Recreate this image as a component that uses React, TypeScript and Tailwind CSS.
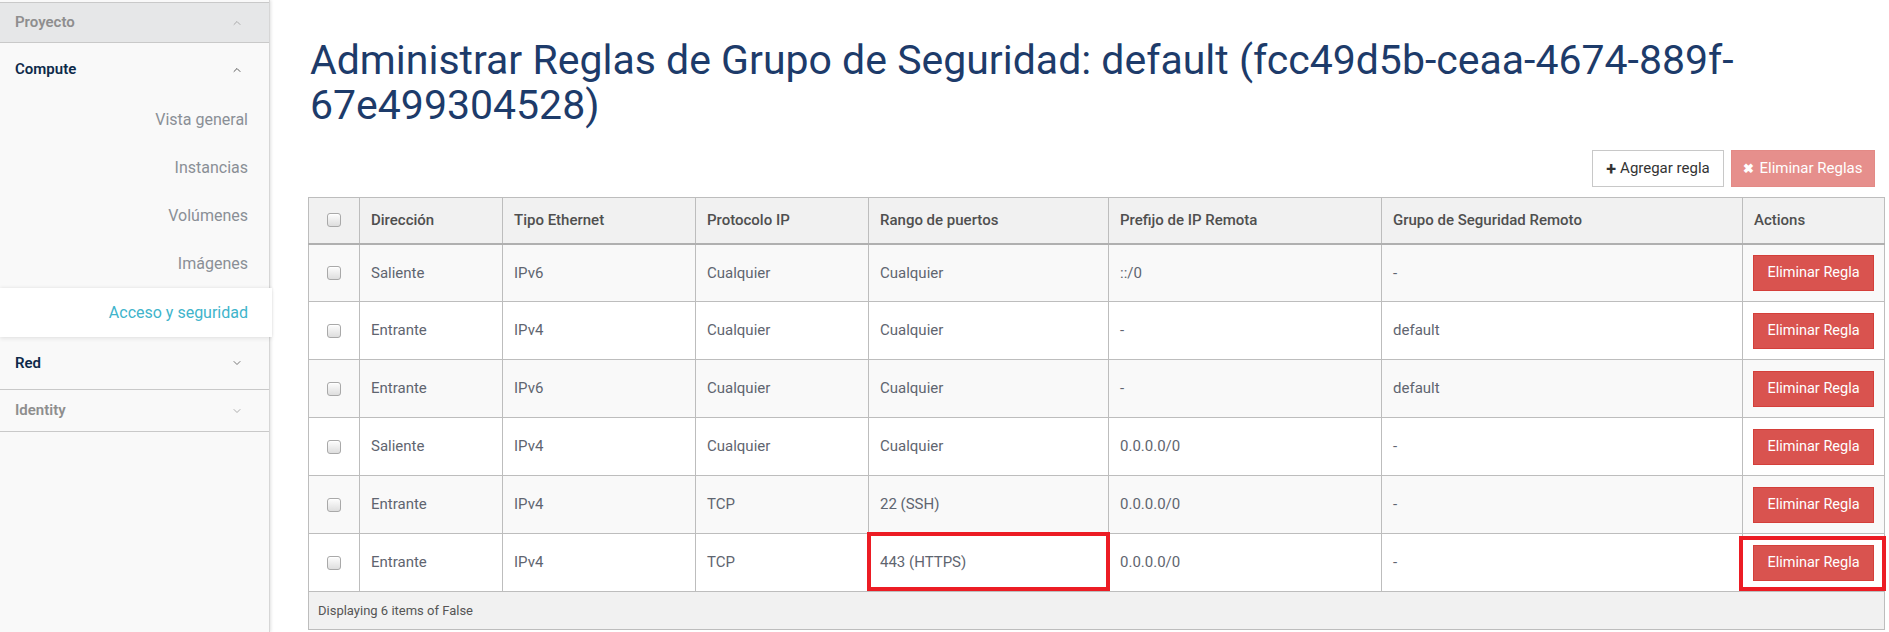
import { ChevronDown, ChevronUp } from "lucide-react";

const rows = [
  { dir: "Saliente", eth: "IPv6", proto: "Cualquier", range: "Cualquier", prefix: "::/0", group: "-" },
  { dir: "Entrante", eth: "IPv4", proto: "Cualquier", range: "Cualquier", prefix: "-", group: "default" },
  { dir: "Entrante", eth: "IPv6", proto: "Cualquier", range: "Cualquier", prefix: "-", group: "default" },
  { dir: "Saliente", eth: "IPv4", proto: "Cualquier", range: "Cualquier", prefix: "0.0.0.0/0", group: "-" },
  { dir: "Entrante", eth: "IPv4", proto: "TCP", range: "22 (SSH)", prefix: "0.0.0.0/0", group: "-" },
  { dir: "Entrante", eth: "IPv4", proto: "TCP", range: "443 (HTTPS)", prefix: "0.0.0.0/0", group: "-" },
];

function Check() {
  return (
    <span className="mx-auto block h-[14px] w-[14px] rounded-[3px] border border-[#a9a9a9] bg-gradient-to-b from-[#fdfdfd] to-[#dedede] shadow-[inset_0_1px_0_#fff]" />
  );
}

function Sidebar() {
  return (
    <aside className="flex min-h-[632px] w-[270px] shrink-0 flex-col border-r border-[#d6d6d6] bg-[#f9f9f9] pt-[2px] shadow-[1px_0_3px_rgba(0,0,0,0.12)]">
      <div className="flex h-[41px] items-center justify-between border-y border-[#c9c9c9] bg-[#e6e7e8] pl-[15px] pr-[26px]">
        <span className="text-[15px] font-semibold text-[#8e8e8e]">Proyecto</span>
        <ChevronUp size={12} strokeWidth={1.6} className="text-[#9a9a9a]" />
      </div>
      <div className="flex h-[53px] items-center justify-between pl-[15px] pr-[26px]">
        <span className="text-[15px] font-semibold text-[#0d2a4a]">Compute</span>
        <ChevronUp size={12} strokeWidth={1.6} className="text-[#333]" />
      </div>
      {["Vista general", "Instancias", "Volúmenes", "Imágenes"].map((t) => (
        <div key={t} className="flex h-[48px] items-center justify-end pr-[21px] text-[16px] text-[#8a8f96]">
          {t}
        </div>
      ))}
      <div className="-mr-[3px] flex h-[49px] items-center justify-end bg-white pr-[24px] text-[16px] text-[#40b4cb] shadow-[0_-1px_3px_rgba(0,0,0,0.06),0_2px_4px_rgba(0,0,0,0.08)]">
        Acceso y seguridad
      </div>
      <div className="flex h-[53px] items-center justify-between border-b border-[#c9c9c9] pl-[15px] pr-[26px]">
        <span className="text-[15px] font-semibold text-[#0d2a4a]">Red</span>
        <ChevronDown size={12} strokeWidth={1.6} className="text-[#555]" />
      </div>
      <div className="flex h-[42px] items-center justify-between border-b border-[#c9c9c9] pl-[15px] pr-[26px]">
        <span className="text-[15px] font-semibold text-[#8e8e8e]">Identity</span>
        <ChevronDown size={12} strokeWidth={1.6} className="text-[#9a9a9a]" />
      </div>
    </aside>
  );
}

export default function App() {
  const th = "border border-[#bdbdbd] border-b-2 border-b-[#b0b0b0] px-[11px] text-left text-[15px] font-medium text-[#4f4f4f]";
  const td = "border border-[#bdbdbd] px-[11px] text-[15px] text-[#5f6570]";
  return (
    <div className="flex h-[632px] w-[1889px] overflow-hidden bg-white font-['Roboto',sans-serif]">
      <Sidebar />
      <main className="flex-1 pl-[38px] pr-[5px]">
        <h1 className="mt-[38px] pl-[2px] text-[41px] font-normal leading-[45px] text-[#1d3b6a]">
          Administrar Reglas de Grupo de Seguridad: default (fcc49d5b-ceaa-4674-889f-
          <br />
          67e499304528)
        </h1>
        <div className="mt-[22px] flex justify-end gap-[7px] pr-[10px]">
          <button className="flex h-[37px] w-[132px] items-center justify-center gap-[4px] border border-[#c8c8c8] bg-white text-[15px] text-[#333]">
            <span className="text-[18px] font-bold leading-none">+</span>Agregar regla
          </button>
          <button className="flex h-[37px] w-[144px] items-center justify-center gap-[5px] border border-[#e38a86] bg-[#e68f8c] text-[15px] text-white">
            <span className="text-[13px] font-bold leading-none">✖</span>Eliminar Reglas
          </button>
        </div>
        <table className="mt-[10px] w-[1576px] table-fixed border-collapse border border-[#bdbdbd]">
          <colgroup>
            <col className="w-[51px]" />
            <col className="w-[143px]" />
            <col className="w-[193px]" />
            <col className="w-[173px]" />
            <col className="w-[240px]" />
            <col className="w-[273px]" />
            <col className="w-[361px]" />
            <col className="w-[142px]" />
          </colgroup>
          <thead>
            <tr className="h-[46px] bg-[#f1f1f1]">
              <th className="border border-[#bdbdbd] border-b-2 border-b-[#b0b0b0]">
                <Check />
              </th>
              <th className={th}>Dirección</th>
              <th className={th}>Tipo Ethernet</th>
              <th className={th}>Protocolo IP</th>
              <th className={th}>Rango de puertos</th>
              <th className={th}>Prefijo de IP Remota</th>
              <th className={th}>Grupo de Seguridad Remoto</th>
              <th className={th}>Actions</th>
            </tr>
          </thead>
          <tbody>
            {rows.map((r, i) => {
              const last = i === rows.length - 1;
              return (
                <tr key={i} className={i % 2 === 0 ? "h-[58px] bg-[#f9f9f9]" : "h-[58px] bg-white"}>
                  <td className="border border-[#bdbdbd]">
                    <Check />
                  </td>
                  <td className={td}>{r.dir}</td>
                  <td className={td}>{r.eth}</td>
                  <td className={td}>{r.proto}</td>
                  <td className={`${td} relative`}>
                    {r.range}
                    {last && <div className="absolute -top-[2px] -right-[2px] bottom-0 -left-[2px] border-4 border-[#ec1c24]" />}
                  </td>
                  <td className={td}>{r.prefix}</td>
                  <td className={td}>{r.group}</td>
                  <td className="relative border border-[#bdbdbd] pl-[10px]">
                    <button className="h-[36px] w-[121px] border border-[#d43f3a] bg-[#d9534f] text-[14.5px] text-white">
                      Eliminar Regla
                    </button>
                    {last && <div className="absolute top-[2px] -right-[2px] bottom-0 -left-[4px] border-4 border-[#ec1c24]" />}
                  </td>
                </tr>
              );
            })}
            <tr className="h-[38px] bg-[#f1f1f1]">
              <td colSpan={8} className="border border-[#bdbdbd] px-[9px] text-[13px] text-[#555]">
                Displaying 6 items of False
              </td>
            </tr>
          </tbody>
        </table>
      </main>
    </div>
  );
}
